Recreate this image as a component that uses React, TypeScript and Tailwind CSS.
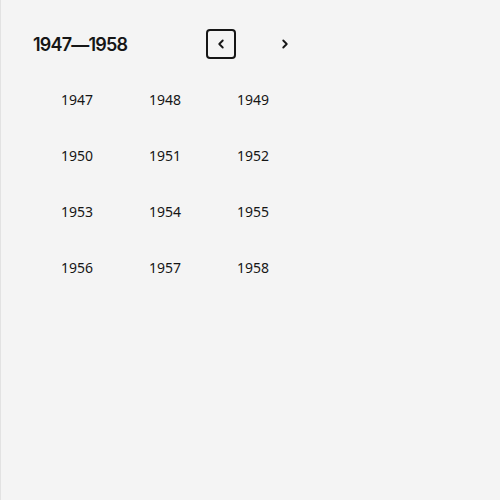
import { ChevronLeft, ChevronRight } from 'lucide-react';

const years = Array.from({ length: 12 }, (_, i) => 1947 + i);

export default function App() {
  return (
    <div className="w-[500px] h-[500px] bg-[#f4f4f4] border-l border-[#e2e2e2] text-[#161616]" style={{ fontFamily: '"Noto Sans", sans-serif' }}>
      <div className="ml-[32px] pt-[29px]">
        {/* header */}
        <div className="flex items-center h-[30px]">
          <div className="w-[173px] shrink-0 whitespace-nowrap text-[18px] font-semibold tracking-[-0.8px]" style={{ fontFamily: 'Inter, sans-serif' }}>
            1947—1958
          </div>
          <button className="w-[30px] h-[30px] shrink-0 flex items-center justify-center border-2 border-[#161616] rounded-[4px]">
            <ChevronLeft size={14} strokeWidth={3.2} />
          </button>
          <button className="ml-[34px] w-[30px] h-[30px] shrink-0 flex items-center justify-center">
            <ChevronRight size={14} strokeWidth={3.2} />
          </button>
        </div>

        {/* years grid */}
        <div className="w-[264px] grid grid-cols-3 mt-[12px]">
          {years.map((y) => (
            <div key={y} className="h-[56px] flex items-center justify-center text-[14px]">
              {y}
            </div>
          ))}
        </div>
      </div>
    </div>
  );
}
